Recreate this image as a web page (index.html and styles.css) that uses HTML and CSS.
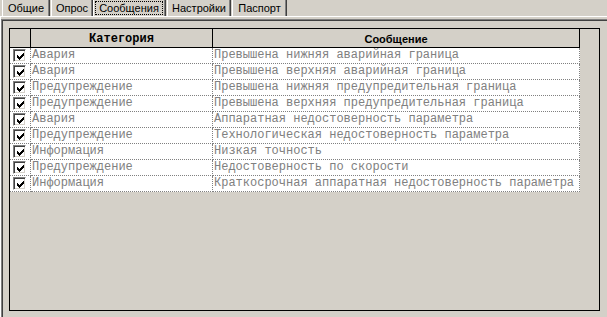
FILE: index.html
```html
<!DOCTYPE html>
<html lang="ru">
<head>
<meta charset="utf-8">
<title>Сообщения</title>
<link rel="stylesheet" href="styles.css">
</head>
<body>
<div class="window">
  <div class="tabs">
    <div class="tab tab-general">Общие</div>
    <div class="tab tab-poll">Опрос</div>
    <div class="tab tab-msg active"><span class="focus">Сообщения</span></div>
    <div class="tab tab-settings">Настройки</div>
    <div class="tab tab-passport">Паспорт</div>
  </div>
  <div class="page">
    <div class="frame">
      <div class="grid">
        <div class="head">
          <div class="hcell c-check"></div>
          <div class="hcell c-cat mono-b">Категория</div>
          <div class="hcell c-msg sans-b">Сообщение</div>
        </div>
        <div class="row">
          <div class="cell c-check"><span class="cb"><svg width="7" height="7" viewBox="0 0 7 7" shape-rendering="crispEdges"><path d="M0 2h1v3h-1zM1 3h1v3h-1zM2 4h1v3h-1zM3 3h1v3h-1zM4 2h1v3h-1zM5 1h1v3h-1zM6 0h1v3h-1z" fill="#000"/></svg></span></div>
          <div class="cell c-cat">Авария</div>
          <div class="cell c-msg">Превышена нижняя аварийная граница</div>
        </div>
        <div class="row">
          <div class="cell c-check"><span class="cb"><svg width="7" height="7" viewBox="0 0 7 7" shape-rendering="crispEdges"><path d="M0 2h1v3h-1zM1 3h1v3h-1zM2 4h1v3h-1zM3 3h1v3h-1zM4 2h1v3h-1zM5 1h1v3h-1zM6 0h1v3h-1z" fill="#000"/></svg></span></div>
          <div class="cell c-cat">Авария</div>
          <div class="cell c-msg">Превышена верхняя аварийная граница</div>
        </div>
        <div class="row">
          <div class="cell c-check"><span class="cb"><svg width="7" height="7" viewBox="0 0 7 7" shape-rendering="crispEdges"><path d="M0 2h1v3h-1zM1 3h1v3h-1zM2 4h1v3h-1zM3 3h1v3h-1zM4 2h1v3h-1zM5 1h1v3h-1zM6 0h1v3h-1z" fill="#000"/></svg></span></div>
          <div class="cell c-cat">Предупреждение</div>
          <div class="cell c-msg">Превышена нижняя предупредительная граница</div>
        </div>
        <div class="row">
          <div class="cell c-check"><span class="cb"><svg width="7" height="7" viewBox="0 0 7 7" shape-rendering="crispEdges"><path d="M0 2h1v3h-1zM1 3h1v3h-1zM2 4h1v3h-1zM3 3h1v3h-1zM4 2h1v3h-1zM5 1h1v3h-1zM6 0h1v3h-1z" fill="#000"/></svg></span></div>
          <div class="cell c-cat">Предупреждение</div>
          <div class="cell c-msg">Превышена верхняя предупредительная граница</div>
        </div>
        <div class="row">
          <div class="cell c-check"><span class="cb"><svg width="7" height="7" viewBox="0 0 7 7" shape-rendering="crispEdges"><path d="M0 2h1v3h-1zM1 3h1v3h-1zM2 4h1v3h-1zM3 3h1v3h-1zM4 2h1v3h-1zM5 1h1v3h-1zM6 0h1v3h-1z" fill="#000"/></svg></span></div>
          <div class="cell c-cat">Авария</div>
          <div class="cell c-msg">Аппаратная недостоверность параметра</div>
        </div>
        <div class="row">
          <div class="cell c-check"><span class="cb"><svg width="7" height="7" viewBox="0 0 7 7" shape-rendering="crispEdges"><path d="M0 2h1v3h-1zM1 3h1v3h-1zM2 4h1v3h-1zM3 3h1v3h-1zM4 2h1v3h-1zM5 1h1v3h-1zM6 0h1v3h-1z" fill="#000"/></svg></span></div>
          <div class="cell c-cat">Предупреждение</div>
          <div class="cell c-msg">Технологическая недостоверность параметра</div>
        </div>
        <div class="row">
          <div class="cell c-check"><span class="cb"><svg width="7" height="7" viewBox="0 0 7 7" shape-rendering="crispEdges"><path d="M0 2h1v3h-1zM1 3h1v3h-1zM2 4h1v3h-1zM3 3h1v3h-1zM4 2h1v3h-1zM5 1h1v3h-1zM6 0h1v3h-1z" fill="#000"/></svg></span></div>
          <div class="cell c-cat">Информация</div>
          <div class="cell c-msg">Низкая точность</div>
        </div>
        <div class="row">
          <div class="cell c-check"><span class="cb"><svg width="7" height="7" viewBox="0 0 7 7" shape-rendering="crispEdges"><path d="M0 2h1v3h-1zM1 3h1v3h-1zM2 4h1v3h-1zM3 3h1v3h-1zM4 2h1v3h-1zM5 1h1v3h-1zM6 0h1v3h-1z" fill="#000"/></svg></span></div>
          <div class="cell c-cat">Предупреждение</div>
          <div class="cell c-msg">Недостоверность по скорости</div>
        </div>
        <div class="row">
          <div class="cell c-check"><span class="cb"><svg width="7" height="7" viewBox="0 0 7 7" shape-rendering="crispEdges"><path d="M0 2h1v3h-1zM1 3h1v3h-1zM2 4h1v3h-1zM3 3h1v3h-1zM4 2h1v3h-1zM5 1h1v3h-1zM6 0h1v3h-1z" fill="#000"/></svg></span></div>
          <div class="cell c-cat">Информация</div>
          <div class="cell c-msg">Краткосрочная аппаратная недостоверность параметра</div>
        </div>
      </div>
    </div>
  </div>
</div>
</body>
</html>
```
FILE: styles.css
```css
* { box-sizing: border-box; }
html, body {
  margin: 0;
  padding: 0;
  background: #d4d0c8;
}
.window {
  width: 607px;
  height: 317px;
  overflow: hidden;
  background: #d4d0c8;
  font-family: "Liberation Sans", Arial, sans-serif;
  font-size: 11px;
  color: #000;
}
.tabs {
  display: flex;
  gap: 1px;
  height: 16px;
  padding-left: 2px;
}
.tab {
  flex: none;
  height: 16px;
  line-height: 16px;
  text-align: center;
  border-left: 1px solid #fff;
  border-right: 1px solid #404040;
  box-shadow: inset -1px 0 #808080;
  padding-top: 0;
  white-space: nowrap;
}
.tab-general { width: 48px; }
.tab-poll { width: 42px; }
.tab-msg { width: 73px; margin-left: -1px; }
.tab-settings { width: 64px; }
.tab-passport { width: 55px; }
.tab.active {
  display: flex;
  padding: 1px 2px 1px 1px;
}
.focus {
  flex: 1;
  border: 1px dotted #000;
  line-height: 12px;
  height: 14px;
}
.page {
  border-top: 1px solid #fff;
  border-left: 1px solid #fff;
  padding-top: 2px;
  height: 301px;
}
.frame {
  border-top: 1px solid #808080;
  border-left: 1px solid #808080;
  box-shadow: inset 1px 1px #404040;
  padding: 8px 0 0 7px;
  height: 100%;
}
.grid {
  width: 591px;
  height: 283px;
  border: 1px solid #000;
  background: #d4d0c8;
}
.head, .row {
  display: flex;
  width: 570px;
}
.hcell {
  height: 19px;
  border-right: 1px solid #000;
  border-bottom: 1px solid #000;
  background: #d4d0c8;
  text-align: center;
  line-height: 18px;
  padding-top: 1px;
  color: #000;
}
.mono-b {
  font-family: "Liberation Mono", "Courier New", monospace;
  font-weight: bold;
  font-size: 12px;
}
.sans-b {
  font-family: "Liberation Sans", Arial, sans-serif;
  font-weight: bold;
  font-size: 11px;
}
.c-check { width: 21px; }
.c-cat { width: 182px; }
.c-msg { width: 367px; }
.cell {
  height: 16px;
  background: #fff;
  border-right: 1px dotted #808080;
  border-bottom: 1px dotted #808080;
  font-family: "Liberation Mono", "Courier New", monospace;
  font-size: 12px;
  line-height: 15px;
  color: #808080;
  padding-left: 1px;
  white-space: nowrap;
  overflow: hidden;
}
.cell.c-check {
  padding: 1px 0 0 3px;
}
.cb {
  display: flex;
  align-items: center;
  justify-content: center;
  width: 13px;
  height: 13px;
  background: #fff;
  border: 1px solid;
  border-color: #808080 #fff #fff #808080;
  box-shadow: inset 1px 1px #404040, inset -1px -1px #d4d0c8;
}
.cb svg { display: block; margin: 1px 0 0 1px; }
```
